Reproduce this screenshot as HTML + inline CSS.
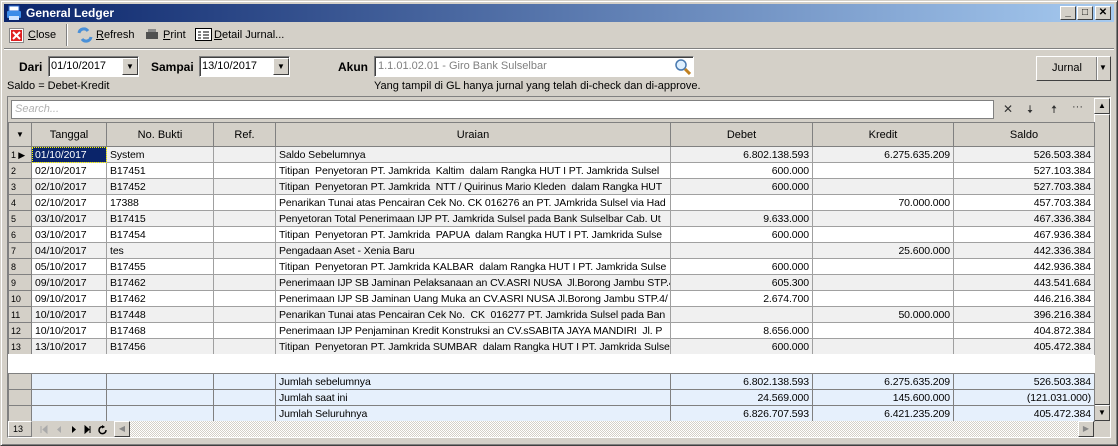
<!DOCTYPE html><html><head><style>
*{box-sizing:border-box;margin:0;padding:0}
body{width:1118px;height:446px;background:#d4d0c8;font-family:"Liberation Sans",sans-serif;font-size:11px;color:#000;position:relative;overflow:hidden}
.abs{position:absolute;white-space:nowrap}
.title{left:4px;top:4px;width:1110px;height:18px;background:linear-gradient(90deg,#0a246a,#a6caf0);color:#fff;font-weight:bold;font-size:12px;line-height:18px;padding-left:22px}
.wb{width:16px;height:14px;top:6px;background:#d4d0c8;border:1px solid;border-color:#fff #404040 #404040 #fff;font-size:10px;line-height:12px;text-align:center;font-weight:bold;color:#000}
.inp{background:#fff;border:1px solid;border-color:#808080 #fff #fff #808080;box-shadow:inset 1px 1px #404040}
.dd{width:16px;height:17px;background:#d4d0c8;border:1px solid;border-color:#fff #404040 #404040 #fff;font-size:8px;text-align:center;line-height:15px}
table{border-collapse:collapse;table-layout:fixed;position:absolute;left:8px}
td{border:1px solid #a0a0a0;height:16px;padding:0 3px;white-space:nowrap;overflow:hidden;font-size:10.5px;letter-spacing:-0.1px;line-height:14px}
td.r{text-align:right}
td.n{background:#d4d0c8;font-size:9px;padding-left:2px;border-color:#808080}
tr.o td{background:#f0f0f0}
tr.o td.n,tr.e td.n{background:#d4d0c8}
tr.e td{background:#fff}
th{background:#d4d0c8;border:1px solid #808080;font-weight:normal;height:24px;font-size:11px}
.sum td{background:#e6f0fc;border-color:#808080;height:16px}
.sum td.n{background:#d4d0c8}
</style></head><body>
<div class="abs" style="left:0;top:0;width:1118px;height:446px;border:1px solid;border-color:#d4d0c8 #404040 #404040 #d4d0c8;box-shadow:inset 1px 1px #fff,inset -1px -1px #808080"></div>
<div class="abs title">General Ledger</div>
<svg class="abs" style="left:6px;top:5px" width="16" height="16"><rect x="3" y="1" width="10" height="5" fill="#fff" stroke="#2a6ad0"/><rect x="1" y="6" width="14" height="7" rx="1" fill="#3c8ce8"/><rect x="3" y="11" width="10" height="4" fill="#cfe4ff"/></svg>
<div class="abs wb" style="left:1060px">_</div><div class="abs wb" style="left:1077px">□</div><div class="abs wb" style="left:1095px">✕</div>
<svg class="abs" style="left:9px;top:28px" width="15" height="15"><rect x=".5" y=".5" width="14" height="14" fill="#fff" stroke="#888"/><rect x="2" y="2" width="11" height="11" fill="#e02020"/><path d="M4 4l7 7M11 4l-7 7" stroke="#fff" stroke-width="2"/></svg>
<div class="abs" style="left:28px;top:29px"><u>C</u>lose</div>
<div class="abs" style="left:66px;top:24px;width:1px;height:22px;background:#808080;box-shadow:1px 0 #fff"></div>
<svg class="abs" style="left:77px;top:27px" width="16" height="16"><path d="M2 6a5 5 0 0 1 9-2" stroke="#4a90d8" stroke-width="3" fill="none"/><path d="M14 10a5 5 0 0 1-9 2" stroke="#4a90d8" stroke-width="3" fill="none"/></svg>
<div class="abs" style="left:96px;top:29px"><u>R</u>efresh</div>
<svg class="abs" style="left:145px;top:29px" width="14" height="12"><rect x="1" y="3" width="12" height="7" fill="#505050"/><rect x="3" y="0" width="8" height="3" fill="#888"/></svg>
<div class="abs" style="left:163px;top:29px"><u>P</u>rint</div>
<svg class="abs" style="left:195px;top:28px" width="17" height="13"><rect x=".5" y=".5" width="16" height="12" fill="#fff" stroke="#000"/><path d="M3 4h3M8 4h6M3 7h3M8 7h6M3 10h3M8 10h6" stroke="#000"/></svg>
<div class="abs" style="left:214px;top:29px"><u>D</u>etail Jurnal...</div>
<div class="abs" style="left:4px;top:48px;width:1110px;height:1px;background:#808080;box-shadow:0 1px #fff"></div>
<div class="abs" style="left:19px;top:60px;font-weight:bold;font-size:12px">Dari</div>
<div class="abs inp" style="left:48px;top:56px;width:91px;height:21px;padding:3px 2px">01/10/2017</div>
<div class="abs dd" style="left:122px;top:58px">▼</div>
<div class="abs" style="left:151px;top:60px;font-weight:bold;font-size:12px">Sampai</div>
<div class="abs inp" style="left:199px;top:56px;width:91px;height:21px;padding:3px 2px">13/10/2017</div>
<div class="abs dd" style="left:273px;top:58px">▼</div>
<div class="abs" style="left:338px;top:60px;font-weight:bold;font-size:12px">Akun</div>
<div class="abs inp" style="left:374px;top:56px;width:320px;height:21px;padding:3px 3px;color:#808080">1.1.01.02.01 - Giro Bank Sulselbar</div>
<svg class="abs" style="left:674px;top:58px" width="17" height="17"><circle cx="7" cy="7" r="5" fill="#dff0ff" stroke="#4a7ab0" stroke-width="1.5"/><path d="M11 11l5 5" stroke="#c08020" stroke-width="3"/></svg>
<div class="abs" style="left:7px;top:80px">Saldo = Debet-Kredit</div>
<div class="abs" style="left:374px;top:80px">Yang tampil di GL hanya jurnal yang telah di-check dan di-approve.</div>
<div class="abs" style="left:1036px;top:56px;width:75px;height:25px;border:1px solid;border-color:#fff #404040 #404040 #fff;background:#d4d0c8"></div>
<div class="abs" style="left:1052px;top:62px">Jurnal</div>
<div class="abs" style="left:1096px;top:57px;width:1px;height:23px;background:#808080;box-shadow:1px 0 #fff"></div>
<div class="abs" style="left:1099px;top:63px;font-size:8px">▼</div>
<div class="abs" style="left:7px;top:96px;width:1104px;height:342px;border:1px solid;border-color:#808080 #fff #fff #808080"></div>
<div class="abs inp" style="left:11px;top:100px;width:983px;height:19px;padding:2px 3px;color:#b0b0b0;font-style:italic;box-shadow:none;border-color:#808080">Search...</div>
<div class="abs" style="left:1003px;top:102px;color:#333;font-size:12px">✕</div>
<div class="abs" style="left:1027px;top:101px;color:#333;font-size:11px">🠇</div>
<div class="abs" style="left:1051px;top:101px;color:#333;font-size:11px">🠅</div>
<div class="abs" style="left:1072px;top:101px;color:#333">···</div>
<div class="abs" style="left:1094px;top:98px;width:16px;height:323px;background:#d4d0c8"></div>
<div class="abs dd" style="left:1094px;top:98px;height:16px;line-height:14px">▲</div>
<div class="abs" style="left:1094px;top:114px;width:16px;height:291px;border:1px solid;border-color:#fff #404040 #404040 #fff"></div>
<div class="abs dd" style="left:1094px;top:405px;height:16px;line-height:14px">▼</div>
<table style="top:122px;width:1086px">
<colgroup><col style="width:23px"><col style="width:75px"><col style="width:107px"><col style="width:62px"><col style="width:395px"><col style="width:142px"><col style="width:141px"><col style="width:141px"></colgroup>
<tr><th style="font-size:8px">▼</th><th>Tanggal</th><th>No. Bukti</th><th>Ref.</th><th>Uraian</th><th>Debet</th><th>Kredit</th><th>Saldo</th></tr>
<tr class="o"><td class="n">1 ▶</td><td style="background:#0a246a;color:#fff;outline:1px dotted #ff0;outline-offset:-1px">01/10/2017</td><td>System</td><td></td><td>Saldo Sebelumnya</td><td class="r">6.802.138.593</td><td class="r">6.275.635.209</td><td class="r">526.503.384</td></tr>
<tr class="e"><td class="n">2</td><td>02/10/2017</td><td>B17451</td><td></td><td>Titipan &nbsp;Penyetoran PT. Jamkrida &nbsp;Kaltim &nbsp;dalam Rangka HUT I PT. Jamkrida Sulsel</td><td class="r">600.000</td><td></td><td class="r">527.103.384</td></tr>
<tr class="o"><td class="n">3</td><td>02/10/2017</td><td>B17452</td><td></td><td>Titipan &nbsp;Penyetoran PT. Jamkrida &nbsp;NTT / Quirinus Mario Kleden &nbsp;dalam Rangka HUT</td><td class="r">600.000</td><td></td><td class="r">527.703.384</td></tr>
<tr class="e"><td class="n">4</td><td>02/10/2017</td><td>17388</td><td></td><td>Penarikan Tunai atas Pencairan Cek No. CK 016276 an PT. JAmkrida Sulsel via Had</td><td></td><td class="r">70.000.000</td><td class="r">457.703.384</td></tr>
<tr class="o"><td class="n">5</td><td>03/10/2017</td><td>B17415</td><td></td><td>Penyetoran Total Penerimaan IJP PT. Jamkrida Sulsel pada Bank Sulselbar Cab. Ut</td><td class="r">9.633.000</td><td></td><td class="r">467.336.384</td></tr>
<tr class="e"><td class="n">6</td><td>03/10/2017</td><td>B17454</td><td></td><td>Titipan &nbsp;Penyetoran PT. Jamkrida &nbsp;PAPUA &nbsp;dalam Rangka HUT I PT. Jamkrida Sulse</td><td class="r">600.000</td><td></td><td class="r">467.936.384</td></tr>
<tr class="o"><td class="n">7</td><td>04/10/2017</td><td>tes</td><td></td><td>Pengadaan Aset - Xenia Baru</td><td></td><td class="r">25.600.000</td><td class="r">442.336.384</td></tr>
<tr class="e"><td class="n">8</td><td>05/10/2017</td><td>B17455</td><td></td><td>Titipan &nbsp;Penyetoran PT. Jamkrida KALBAR &nbsp;dalam Rangka HUT I PT. Jamkrida Sulse</td><td class="r">600.000</td><td></td><td class="r">442.936.384</td></tr>
<tr class="o"><td class="n">9</td><td>09/10/2017</td><td>B17462</td><td></td><td>Penerimaan IJP SB Jaminan Pelaksanaan an CV.ASRI NUSA &nbsp;Jl.Borong Jambu STP.4/</td><td class="r">605.300</td><td></td><td class="r">443.541.684</td></tr>
<tr class="e"><td class="n">10</td><td>09/10/2017</td><td>B17462</td><td></td><td>Penerimaan IJP SB Jaminan Uang Muka an CV.ASRI NUSA Jl.Borong Jambu STP.4/</td><td class="r">2.674.700</td><td></td><td class="r">446.216.384</td></tr>
<tr class="o"><td class="n">11</td><td>10/10/2017</td><td>B17448</td><td></td><td>Penarikan Tunai atas Pencairan Cek No. &nbsp;CK &nbsp;016277 PT. Jamkrida Sulsel pada Ban</td><td></td><td class="r">50.000.000</td><td class="r">396.216.384</td></tr>
<tr class="e"><td class="n">12</td><td>10/10/2017</td><td>B17468</td><td></td><td>Penerimaan IJP Penjaminan Kredit Konstruksi an CV.sSABITA JAYA MANDIRI &nbsp;Jl. P</td><td class="r">8.656.000</td><td></td><td class="r">404.872.384</td></tr>
<tr class="o"><td class="n">13</td><td>13/10/2017</td><td>B17456</td><td></td><td>Titipan &nbsp;Penyetoran PT. Jamkrida SUMBAR &nbsp;dalam Rangka HUT I PT. Jamkrida Sulse</td><td class="r">600.000</td><td></td><td class="r">405.472.384</td></tr>
</table>
<div class="abs" style="left:8px;top:354px;width:1086px;height:19px;background:#fff"></div>
<table style="top:373px;width:1086px">
<colgroup><col style="width:23px"><col style="width:75px"><col style="width:107px"><col style="width:62px"><col style="width:395px"><col style="width:142px"><col style="width:141px"><col style="width:141px"></colgroup>
<tr class="sum"><td class="n"></td><td></td><td></td><td></td><td>Jumlah sebelumnya</td><td class="r">6.802.138.593</td><td class="r">6.275.635.209</td><td class="r">526.503.384</td></tr>
<tr class="sum"><td class="n"></td><td></td><td></td><td></td><td>Jumlah saat ini</td><td class="r">24.569.000</td><td class="r">145.600.000</td><td class="r">(121.031.000)</td></tr>
<tr class="sum"><td class="n"></td><td></td><td></td><td></td><td>Jumlah Seluruhnya</td><td class="r">6.826.707.593</td><td class="r">6.421.235.209</td><td class="r">405.472.384</td></tr>
</table>
<div class="abs" style="left:8px;top:421px;width:1086px;height:16px;background:repeating-conic-gradient(#d4d0c8 0 25%,#fff 0 50%) 0 0/2px 2px"></div>
<div class="abs" style="left:8px;top:421px;width:24px;height:16px;background:#d4d0c8;border:1px solid;border-color:#fff #808080 #808080 #fff;font-size:9px;padding:2px 0 0 4px">13</div>
<div class="abs" style="left:32px;top:421px;width:82px;height:16px;background:#d4d0c8"></div>
<svg class="abs" style="left:40px;top:424px" width="72" height="11"><path d="M1 2v7M7 2l-4 3.5 4 3.5z" fill="#aaa" stroke="#aaa"/><path d="M21 2l-4 3.5 4 3.5z" fill="#aaa"/><path d="M32 2l4 3.5-4 3.5z" fill="#000"/><path d="M45 2l4 3.5-4 3.5zM50 2v7" fill="#000" stroke="#000"/><path d="M64 3a3.5 3.5 0 1 0 2 3" stroke="#000" stroke-width="1.5" fill="none"/><path d="M62 1l3 2-3 1.5z" fill="#000"/></svg>
<div class="abs dd" style="left:114px;top:421px;height:16px;line-height:14px;color:#888">◀</div>
<div class="abs dd" style="left:1078px;top:421px;height:16px;line-height:14px;color:#888">▶</div>
</body></html>
